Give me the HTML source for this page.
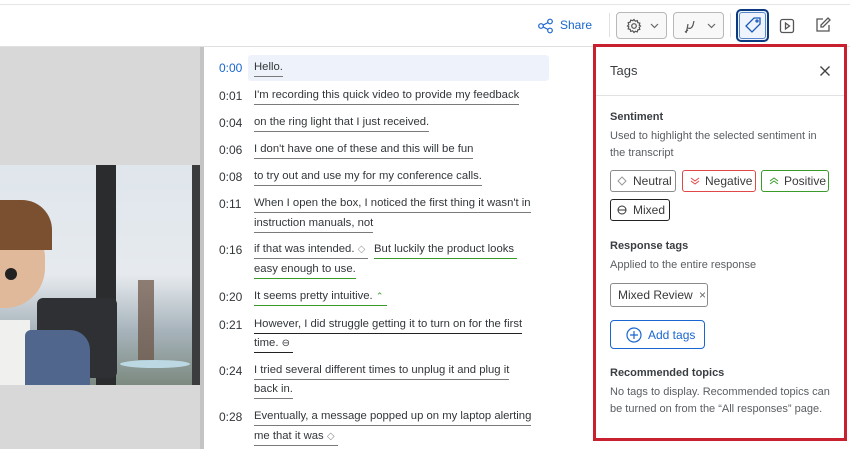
<!DOCTYPE html>
<html><head><meta charset="utf-8"><style>
*{box-sizing:border-box;margin:0;padding:0}
body{width:850px;height:449px;overflow:hidden;background:#fff;font-family:"Liberation Sans",sans-serif;color:#32363a;position:relative}
.a{position:absolute}
.t{position:absolute;font-size:12px;white-space:nowrap}
.tm{left:219px;color:#32363a}
.tx{left:254px;padding-bottom:3px;border-bottom:1.5px solid #7a7a7a;font-size:11.3px}
.g{border-bottom-color:#3a9a2a}
.k{border-bottom-color:#222}
.btn{position:absolute;top:12px;height:27px;border:1px solid #b8b8b8;border-radius:4px;background:#f8f8f8}
.chip{position:absolute;height:22px;border:1px solid #8a8a8a;border-radius:3px;font-size:12px;line-height:20px;padding-left:22px;color:#3a3a3a}
.p{position:absolute;left:610px;font-size:11px;color:#5a5e62}
.h{position:absolute;left:610px;font-size:11px;font-weight:bold;color:#3a3e42}
</style></head><body>
<div class="a" style="left:0;top:4px;width:850px;height:1px;background:#e6e6e6"></div>
<div class="a" style="left:0;top:46px;width:850px;height:1px;background:#e0e0e0"></div>
<!-- toolbar -->
<svg class="a" style="left:537px;top:18px" width="18" height="16" viewBox="0 0 18 16" fill="none" stroke="#1a66d0" stroke-width="1.2"><circle cx="4" cy="8" r="2.3"/><circle cx="13" cy="3.5" r="2.3"/><circle cx="13" cy="12.5" r="2.3"/><path d="M6.2 7 L10.9 4.6 M6.2 9 L10.9 11.4"/></svg>
<div class="t" style="left:560px;top:18px;color:#1a66d0">Share</div>
<div class="a" style="left:609px;top:13px;width:1px;height:24px;background:#e0e0e0"></div>
<div class="btn" style="left:616px;width:51px"><svg class="a" style="left:9px;top:5px" width="16" height="16" viewBox="0 0 16 16" fill="none" stroke="#555" stroke-width="1.2"><circle cx="8" cy="8" r="2.3"/><path d="M8 1.5l1.3 1.7 2-.6.5 2 2 .6-.6 2L14.5 8l-1.3 1.3.6 2-2 .6-.5 2-2-.6L8 14.5l-1.3-1.7-2 .6-.5-2-2-.6.6-2L1.5 8l1.3-1.3-.6-2 2-.6.5-2 2 .6z"/></svg><svg class="a" style="left:33px;top:10px" width="9" height="6"><path d="M1 1l3.5 3.5L8 1" fill="none" stroke="#666" stroke-width="1.2"/></svg></div>
<div class="btn" style="left:673px;width:51px"><svg class="a" style="left:9px;top:5px" width="16" height="16" viewBox="0 0 16 16" fill="none" stroke="#555" stroke-width="1.2"><path d="M3 15c1-3 1.5-6 2-9M5 10c2 1 4 0 5-3l1-4M2 14l3-2"/></svg><svg class="a" style="left:33px;top:10px" width="9" height="6"><path d="M1 1l3.5 3.5L8 1" fill="none" stroke="#666" stroke-width="1.2"/></svg></div>
<div class="a" style="left:730px;top:13px;width:1px;height:24px;background:#e0e0e0"></div>
<div class="a" style="left:736px;top:9px;width:33px;height:33px;border:2px solid #0a3a80;border-radius:5px;background:#eef4fd"><div class="a" style="left:1px;top:1px;width:27px;height:27px;border:1px solid #5a86c8;border-radius:3px"></div><svg class="a" style="left:6px;top:5px" width="18" height="18" viewBox="0 0 18 18" fill="none" stroke="#1a5ab8" stroke-width="1.3"><path d="M10 2h6v6l-8 8-6-6z"/><circle cx="13" cy="5" r="1"/></svg></div>
<svg class="a" style="left:779px;top:18px" width="16" height="16" viewBox="0 0 16 16" fill="none" stroke="#555" stroke-width="1.3"><rect x="1.5" y="1.5" width="13" height="13" rx="2"/><path d="M6.5 5v6l4-3z"/></svg>
<svg class="a" style="left:814px;top:16px" width="18" height="18" viewBox="0 0 18 18" fill="none" stroke="#555" stroke-width="1.3"><path d="M9 3H3v12h12V9"/><path d="M14 2l2 2-7 7H7V9z"/></svg>
<!-- video -->
<div class="a" style="left:0;top:47px;width:200px;height:402px;background:#d8d8d8"></div>
<div class="a" style="left:200px;top:47px;width:4px;height:402px;background:#c4c4c4"></div>
<div class="a" style="left:0;top:165px;width:200px;height:220px;background:linear-gradient(180deg,#dfe6ec 0%,#e6eaee 50%,#a8b4bc 75%,#7c8a80 100%)"></div>
<div class="a" style="left:96px;top:165px;width:20px;height:220px;background:#2a2c2e"></div>
<div class="a" style="left:192px;top:165px;width:8px;height:220px;background:#3a3c3e"></div>
<div class="a" style="left:37px;top:298px;width:80px;height:80px;background:#2e3033;border-radius:6px"></div>
<div class="a" style="left:120px;top:360px;width:70px;height:8px;background:#bcd8e2;border-radius:50%"></div>
<div class="a" style="left:138px;top:280px;width:16px;height:80px;background:#6a5040;opacity:.7"></div>
<div class="a" style="left:0;top:218px;width:45px;height:90px;background:#e0b89a;border-radius:0 40px 40px 0"></div>
<div class="a" style="left:0;top:200px;width:52px;height:50px;background:#7a5030;border-radius:0 30px 0 0"></div>
<div class="a" style="left:5px;top:268px;width:12px;height:12px;background:#222;border-radius:50%"></div>
<div class="a" style="left:0;top:320px;width:30px;height:65px;background:#f0f0ee"></div>
<div class="a" style="left:25px;top:330px;width:65px;height:55px;background:#50668c;border-radius:6px 20px 0 0"></div>
<!-- transcript -->
<div class="a" style="left:248px;top:55px;width:301px;height:26px;background:#eef3fb;border-radius:3px"></div>
<div class="t tm" style="top:61px;color:#1a66d0">0:00</div><div class="t tx" style="top:61px">Hello.</div>
<div class="t tm" style="top:89px">0:01</div><div class="t tx" style="top:89px">I'm recording this quick video to provide my feedback</div>
<div class="t tm" style="top:116px">0:04</div><div class="t tx" style="top:116px">on the ring light that I just received.</div>
<div class="t tm" style="top:143px">0:06</div><div class="t tx" style="top:143px">I don't have one of these and this will be fun</div>
<div class="t tm" style="top:170px">0:08</div><div class="t tx" style="top:170px">to try out and use my for my conference calls.</div>
<div class="t tm" style="top:197px">0:11</div><div class="t tx" style="top:197px">When I open the box, I noticed the first thing it wasn't in</div>
<div class="t tx" style="top:217px">instruction manuals, not</div>
<div class="t tm" style="top:243px">0:16</div><div class="t tx" style="top:243px">if that was intended. <span style="color:#999;font-size:10px">&#9671;</span>&nbsp;</div>
<div class="t tx g" style="top:243px;left:374px">But luckily the product looks&nbsp;</div>
<div class="t tx g" style="top:263px">easy enough to use.</div>
<div class="t tm" style="top:290px">0:20</div><div class="t tx g" style="top:290px">It seems pretty intuitive. <span style="color:#3a9a2a;font-size:9px">&#8963;</span>&nbsp;</div>
<div class="t tm" style="top:318px">0:21</div><div class="t tx k" style="top:318px">However, I did struggle getting it to turn on for the first</div>
<div class="t tx k" style="top:337px">time. <span style="font-size:10px">&#8854;</span>&nbsp;</div>
<div class="t tm" style="top:364px">0:24</div><div class="t tx" style="top:364px">I tried several different times to unplug it and plug it</div>
<div class="t tx" style="top:383px">back in.</div>
<div class="t tm" style="top:410px">0:28</div><div class="t tx" style="top:410px">Eventually, a message popped up on my laptop alerting</div>
<div class="t tx" style="top:430px">me that it was <span style="color:#888;font-size:10px">&#9671;</span>&nbsp;</div>
<!-- panel -->
<div class="a" style="left:593px;top:44px;width:254px;height:397px;border:3px solid #c8202f;background:#fff"></div>
<div class="t" style="left:610px;top:63px;font-size:13px;color:#3a3e42">Tags</div>
<svg class="a" style="left:819px;top:65px" width="12" height="12"><path d="M1.5 1.5l9 9M10.5 1.5l-9 9" stroke="#444" stroke-width="1.4"/></svg>
<div class="a" style="left:596px;top:95px;width:248px;height:1px;background:#e2e2e2"></div>
<div class="h" style="top:111px">Sentiment</div>
<div class="p" style="top:128px;line-height:17px">Used to highlight the selected sentiment in<br>the transcript</div>
<div class="chip" style="left:610px;top:170px;width:66px">Neutral<svg class="a" style="left:6px;top:5px" width="10" height="10"><path d="M5 1l4 4-4 4-4-4z" fill="none" stroke="#999"/></svg></div>
<div class="chip" style="left:682px;top:170px;width:74px;border-color:#e04848">Negative<svg class="a" style="left:7px;top:5px" width="10" height="10"><path d="M1 2l4 3 4-3M1 5l4 3 4-3" fill="none" stroke="#e04848"/></svg></div>
<div class="chip" style="left:761px;top:170px;width:68px;border-color:#3a9a2a">Positive<svg class="a" style="left:7px;top:5px" width="10" height="10"><path d="M1 8l4-3 4 3M1 5l4-3 4 3" fill="none" stroke="#3a9a2a"/></svg></div>
<div class="chip" style="left:610px;top:199px;width:60px;border-color:#222">Mixed<svg class="a" style="left:6px;top:5px" width="10" height="10"><circle cx="5" cy="5" r="4" fill="none" stroke="#333"/><path d="M1 5h8" stroke="#333"/></svg></div>
<div class="h" style="top:240px">Response tags</div>
<div class="p" style="top:259px">Applied to the entire response</div>
<div class="chip" style="left:610px;top:283px;width:98px;padding-left:7px;height:24px;line-height:22px">Mixed Review <span style="color:#666;margin-left:3px">&#215;</span></div>
<div class="a" style="left:610px;top:320px;width:95px;height:29px;border:1px solid #1a66d0;border-radius:4px"><svg class="a" style="left:15px;top:6px" width="16" height="16"><circle cx="8" cy="8" r="7" fill="none" stroke="#1a66d0" stroke-width="1.2"/><path d="M8 4v8M4 8h8" stroke="#1a66d0" stroke-width="1.2"/></svg><div class="t" style="left:37px;top:7px;color:#1a66d0">Add tags</div></div>
<div class="h" style="top:367px">Recommended topics</div>
<div class="p" style="top:384px;line-height:17px">No tags to display. Recommended topics can<br>be turned on from the “All responses” page.</div>
</body></html>
